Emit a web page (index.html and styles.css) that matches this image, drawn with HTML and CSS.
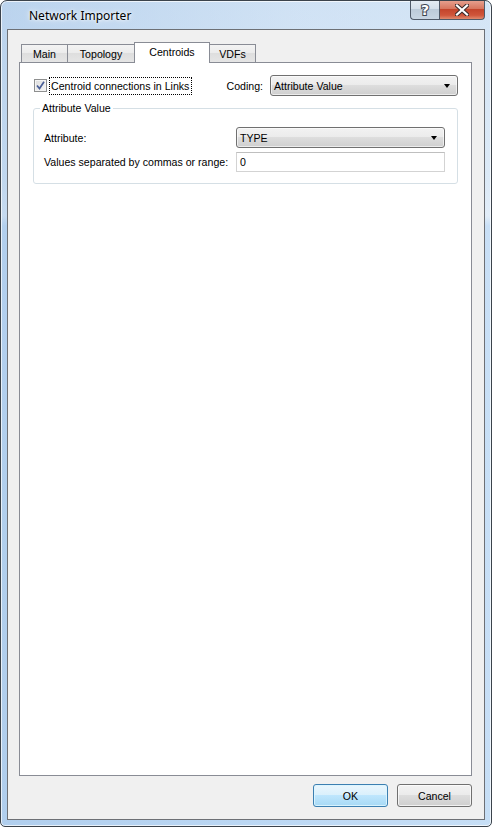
FILE: index.html
```html
<!DOCTYPE html>
<html lang="en">
<head>
    <meta charset="UTF-8">
    <title>Network Importer</title>
    <link rel="stylesheet" href="styles.css">
</head>
<body>
    <div class="window">
        <div class="titlebar">
            <span class="title">Network Importer</span>
            <div class="caption-buttons">
                <div class="cap-btn help"><span>?</span></div>
                <div class="cap-btn close">
                    <svg width="14" height="12" viewBox="0 0 14 12">
                        <path d="M2 1.5 L12 10.5 M12 1.5 L2 10.5" stroke="#3a2a2a" stroke-width="4.2" stroke-linecap="square"/>
                        <path d="M2 1.5 L12 10.5 M12 1.5 L2 10.5" stroke="#ffffff" stroke-width="2.2" stroke-linecap="square"/>
                    </svg>
                </div>
            </div>
        </div>

        <div class="client">
            <div class="tabs">
                <div class="tab">Main</div>
                <div class="tab">Topology</div>
                <div class="tab active">Centroids</div>
                <div class="tab">VDFs</div>
            </div>

            <div class="tab-page">
                <div class="top-row">
                    <label class="check">
                        <span class="box">
                            <svg width="9" height="9" viewBox="0 0 9 9">
                                <path d="M1 4.5 L3.5 7.5 L8 0.8" fill="none" stroke="#4a5f97" stroke-width="1.7"/>
                            </svg>
                        </span>
                        <span class="focus">Centroid connections in Links</span>
                    </label>
                    <div class="coding">
                        <span>Coding:</span>
                        <div class="combo wide">Attribute Value<i class="arrow"></i></div>
                    </div>
                </div>

                <fieldset class="group">
                    <legend>Attribute Value</legend>
                    <div class="fields">
                        <span>Attribute:</span>
                        <div class="combo">TYPE<i class="arrow"></i></div>
                        <span>Values separated by commas or range:</span>
                        <div class="textbox">0</div>
                    </div>
                </fieldset>
            </div>

            <div class="buttons">
                <button class="btn default">OK</button>
                <button class="btn">Cancel</button>
            </div>
        </div>
    </div>
</body>
</html>
```

FILE: styles.css
```css
body {
    margin: 0;
    background: #ffffff;
    font-family: 'Liberation Sans', Arial, sans-serif;
    font-size: 10.6px;
    color: #000;
}

.window {
    width: 492px;
    height: 827px;
    box-sizing: border-box;
    border: 1px solid #3b434c;
    border-radius: 7px 7px 5px 5px;
    box-shadow: inset 0 0 0 1px rgba(255,255,255,0.7);
    background:
        linear-gradient(to right, rgba(170,200,232,0.55), rgba(210,228,246,0.2) 60%, rgba(220,235,248,0.4)),
        linear-gradient(to bottom, #cfe1f4 0, #dce9f6 180px, #e6eff9 215px, #bcd8f5 225px, #b8d6f4 100%);
    display: flex;
    flex-direction: column;
    overflow: hidden;
}

.titlebar {
    height: 28px;
    display: flex;
    align-items: flex-start;
}

.title {
    padding: 6px 0 0 28px;
    font-family: 'Noto Sans', 'Open Sans', sans-serif;
    font-size: 12px;
    color: #000;
    text-shadow: 0 0 6px #fff, 0 0 3px #fff;
}

.caption-buttons {
    display: flex;
    margin-left: auto;
    margin-right: 6px;
    margin-top: -1px;
}

.cap-btn {
    height: 20px;
    box-sizing: border-box;
    border: 1px solid #4f5a68;
    border-top: none;
    display: flex;
    justify-content: center;
    align-items: center;
}

.help {
    width: 29px;
    border-right: none;
    border-radius: 0 0 0 4px;
    background: linear-gradient(to bottom, #e6edf4 0, #d4dfea 50%, #bccbd9 50%, #c8d6e3 100%);
}

.help span {
    font-family: 'DejaVu Sans', sans-serif;
    font-weight: bold;
    font-size: 14px;
    color: #fff;
    -webkit-text-stroke: 2px #3d4550;
    paint-order: stroke fill;
}

.close {
    width: 46px;
    border-radius: 0 0 4px 0;
    background: linear-gradient(to bottom, #e8a493 0, #d8765f 45%, #c4452c 50%, #d0553a 80%, #e08a6e 100%);
}

.client {
    flex: 1;
    margin: 0 6px 6px 6px;
    border: 1px solid #6d7075;
    background: #f0f0f0;
    display: flex;
    flex-direction: column;
    padding: 12px 12px 12px 11px;
}

.tabs {
    display: flex;
    align-items: flex-end;
    height: 21px;
    margin-bottom: -1px;
    padding-left: 2px;
}

.tab {
    height: 18px;
    margin-bottom: 1px;
    box-sizing: border-box;
    border: 1px solid #898c95;
    border-bottom: none;
    margin-left: -1px;
    background: linear-gradient(to bottom, #f3f3f3 0, #ebebeb 50%, #dedede 50%, #e5e5e5 100%);
    display: flex;
    align-items: center;
    justify-content: center;
    padding-top: 1px;
}

.tab:nth-child(1) { width: 47px; margin-left: 0; }
.tab:nth-child(2) { width: 68px; }
.tab:nth-child(3) { width: 76px; }
.tab:nth-child(4) { width: 47px; }

.tab.active {
    height: 21px;
    margin-bottom: 0;
    background: #ffffff;
    position: relative;
    z-index: 1;
    padding-top: 0;
    padding-bottom: 3px;
}

.tab-page {
    flex: 1;
    background: #ffffff;
    border: 1px solid #898c95;
    padding: 12px 13px;
    margin-bottom: 8px;
}

.top-row {
    display: flex;
    align-items: center;
    height: 21px;
}

.check {
    display: flex;
    align-items: center;
    margin-left: 1px;
}

.box {
    width: 13px;
    height: 13px;
    box-sizing: border-box;
    border: 1px solid #8e8f8f;
    background: linear-gradient(135deg, #dcdcdc, #f7f7f7);
    box-shadow: inset 0 0 0 1px #f4f4f4;
    display: flex;
    align-items: center;
    justify-content: center;
    margin-right: 2px;
}

.focus {
    border: 1px dotted #000;
    padding: 2px 2px 2px 1px;
}

.coding {
    margin-left: auto;
    display: flex;
    align-items: center;
    gap: 7px;
}

.combo {
    height: 21px;
    box-sizing: border-box;
    border: 1px solid #707070;
    border-radius: 3px;
    background: linear-gradient(to bottom, #f2f2f2 0, #ebebeb 50%, #dddddd 50%, #cfcfcf 100%);
    box-shadow: inset 0 0 0 1px rgba(255,255,255,0.6);
    display: flex;
    align-items: center;
    padding-left: 3px;
    padding-right: 7px;
}

.combo.wide {
    width: 188px;
}

.arrow {
    margin-left: auto;
    width: 0;
    height: 0;
    border-top: 4px solid #000;
    border-left: 3.5px solid transparent;
    border-right: 3.5px solid transparent;
}

.group {
    margin: 6px 0 0 0;
    padding: 13px 12px 11px 10px;
    border: 1px solid #d5dfe5;
    border-radius: 3px;
}

.group legend {
    padding: 0 2px;
    margin-left: -4px;
}

.fields {
    display: grid;
    grid-template-columns: 192px 1fr;
    row-gap: 4px;
    align-items: center;
}

.textbox {
    height: 20px;
    box-sizing: border-box;
    border: 1px solid #d3d3d3;
    border-top-color: #bfbfbf;
    background: #fff;
    display: flex;
    align-items: center;
    padding-left: 3px;
}

.buttons {
    display: flex;
    justify-content: flex-end;
    gap: 9px;
}

.btn {
    width: 75px;
    height: 23px;
    border: 1px solid #707070;
    border-radius: 3px;
    background: linear-gradient(to bottom, #f2f2f2 0, #ebebeb 50%, #dddddd 50%, #cfcfcf 100%);
    box-shadow: inset 0 0 0 1px rgba(255,255,255,0.7);
    font-family: inherit;
    font-size: 10.6px;
    color: #000;
    padding: 0;
}

.btn.default {
    border-color: #3c7fb1;
    background: linear-gradient(to bottom, #eaf6fd 0, #d9f0fc 50%, #bee6fd 50%, #a7d9f5 100%);
    box-shadow: inset 0 0 0 1px rgba(220,245,255,0.9);
}
```
